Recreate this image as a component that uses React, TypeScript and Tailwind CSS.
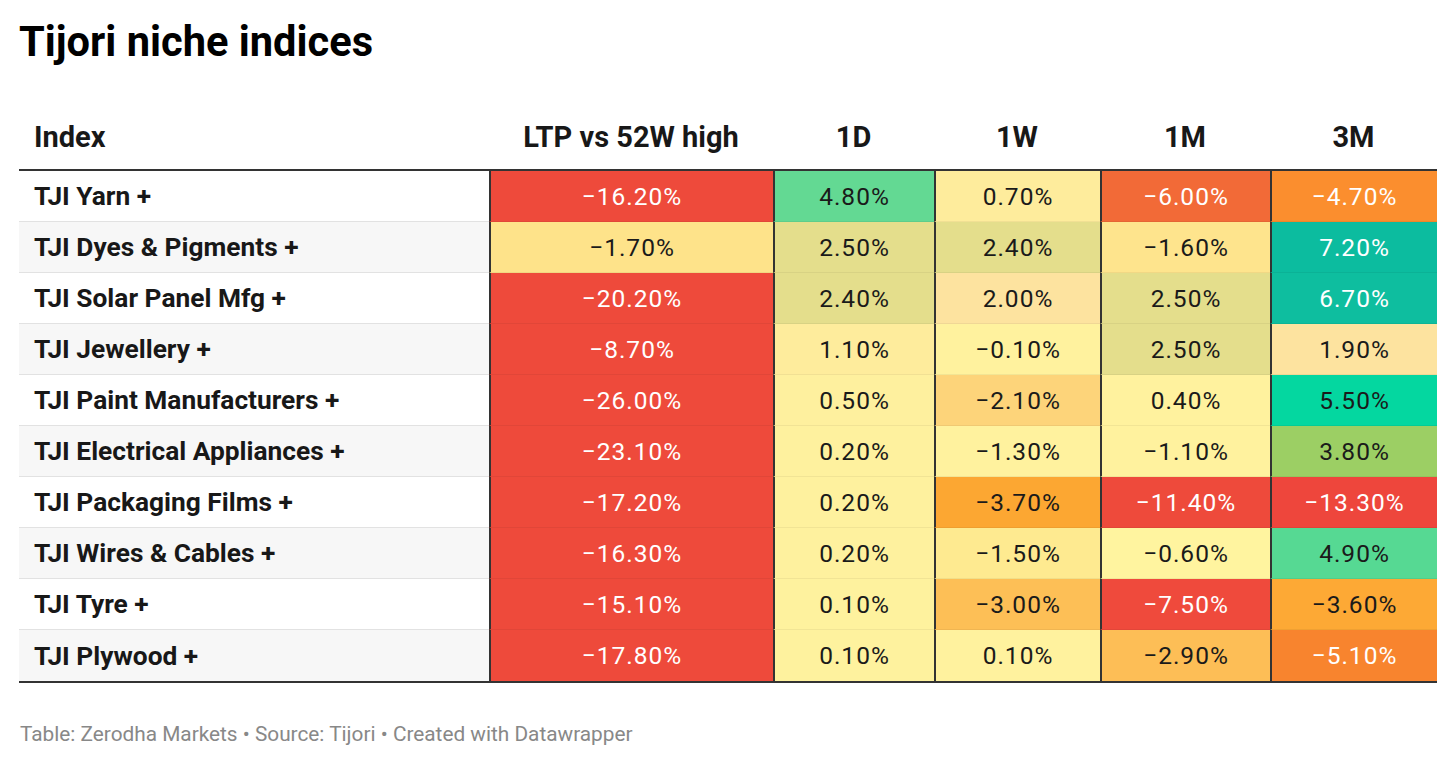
const COLUMNS = ['LTP vs 52W high', '1D', '1W', '1M', '3M'];

type Cell = { v: string; bg: string; light?: boolean };

const RED = '#ee4a3b';
const PALE = '#fff29e';

const ROWS: { name: string; cells: Cell[] }[] = [
  {
    name: 'TJI Yarn +',
    cells: [
      { v: '−16.20%', bg: RED, light: true },
      { v: '4.80%', bg: '#63d993' },
      { v: '0.70%', bg: '#feec9c' },
      { v: '−6.00%', bg: '#f26a37', light: true },
      { v: '−4.70%', bg: '#fb8e2e', light: true },
    ],
  },
  {
    name: 'TJI Dyes & Pigments +',
    cells: [
      { v: '−1.70%', bg: '#fee38a' },
      { v: '2.50%', bg: '#e4de8c' },
      { v: '2.40%', bg: '#e4de8c' },
      { v: '−1.60%', bg: '#fee48d' },
      { v: '7.20%', bg: '#0cbc9f', light: true },
    ],
  },
  {
    name: 'TJI Solar Panel Mfg +',
    cells: [
      { v: '−20.20%', bg: RED, light: true },
      { v: '2.40%', bg: '#e4de8c' },
      { v: '2.00%', bg: '#fde39f' },
      { v: '2.50%', bg: '#e4de8c' },
      { v: '6.70%', bg: '#0ebe9f', light: true },
    ],
  },
  {
    name: 'TJI Jewellery +',
    cells: [
      { v: '−8.70%', bg: RED, light: true },
      { v: '1.10%', bg: '#feec9c' },
      { v: '−0.10%', bg: PALE },
      { v: '2.50%', bg: '#e4de8c' },
      { v: '1.90%', bg: '#fde39f' },
    ],
  },
  {
    name: 'TJI Paint Manufacturers +',
    cells: [
      { v: '−26.00%', bg: RED, light: true },
      { v: '0.50%', bg: '#fef09e' },
      { v: '−2.10%', bg: '#fdd47a' },
      { v: '0.40%', bg: PALE },
      { v: '5.50%', bg: '#04d7a0' },
    ],
  },
  {
    name: 'TJI Electrical Appliances +',
    cells: [
      { v: '−23.10%', bg: RED, light: true },
      { v: '0.20%', bg: '#fef19e' },
      { v: '−1.30%', bg: PALE },
      { v: '−1.10%', bg: PALE },
      { v: '3.80%', bg: '#9ccf64' },
    ],
  },
  {
    name: 'TJI Packaging Films +',
    cells: [
      { v: '−17.20%', bg: RED, light: true },
      { v: '0.20%', bg: '#fef19e' },
      { v: '−3.70%', bg: '#fca732' },
      { v: '−11.40%', bg: RED, light: true },
      { v: '−13.30%', bg: '#ee463c', light: true },
    ],
  },
  {
    name: 'TJI Wires & Cables +',
    cells: [
      { v: '−16.30%', bg: RED, light: true },
      { v: '0.20%', bg: '#fef19e' },
      { v: '−1.50%', bg: '#feea90' },
      { v: '−0.60%', bg: '#fff49f' },
      { v: '4.90%', bg: '#56d993' },
    ],
  },
  {
    name: 'TJI Tyre +',
    cells: [
      { v: '−15.10%', bg: RED, light: true },
      { v: '0.10%', bg: '#fef29e' },
      { v: '−3.00%', bg: '#fdbf56' },
      { v: '−7.50%', bg: '#ef4a3c', light: true },
      { v: '−3.60%', bg: '#fda935' },
    ],
  },
  {
    name: 'TJI Plywood +',
    cells: [
      { v: '−17.80%', bg: RED, light: true },
      { v: '0.10%', bg: '#fef29e' },
      { v: '0.10%', bg: PALE },
      { v: '−2.90%', bg: '#fdbe56' },
      { v: '−5.10%', bg: '#f8842e', light: true },
    ],
  },
];

const GRID = 'grid grid-cols-[470px_284px_161px_166px_170px_167px]';

export default function App() {
  return (
    <div className="min-h-screen bg-white font-['Roboto',sans-serif] text-[#181818]">
      <h1 className="pl-[19px] pt-[17px] text-[41.6px] font-bold leading-[50px] text-black">Tijori niche indices</h1>

      <div className="ml-[19px] mt-[53px] w-[1418px]">
        <div className={`${GRID} border-b-2 border-[#333] pb-[15px] text-[29px] font-bold leading-[34px]`}>
          <div className="pl-[15px]">Index</div>
          {COLUMNS.map(c => (
            <div key={c} className="text-center">{c}</div>
          ))}
        </div>

        <div className="border-b-2 border-[#333]">
          {ROWS.map((row, i) => (
            <div key={row.name} className={`${GRID} h-[51px]`}>
              <div
                className={`flex items-center border-b border-[#e2e2e2] pl-[15px] pt-[2px] text-[26.3px] font-bold ${
                  i % 2 === 1 ? 'bg-[#f7f7f7]' : 'bg-white'
                } ${i === ROWS.length - 1 ? 'border-b-0' : ''}`}
              >
                {row.name}
              </div>
              {row.cells.map((c, j) => (
                <div
                  key={j}
                  className={`flex items-center justify-center border-l-2 border-l-[#333] pt-[2px] text-[24.5px] tracking-[1px] ${
                    i === ROWS.length - 1 ? '' : 'border-b border-b-black/5'
                  } ${c.light ? 'text-white' : 'text-[#1a1a1a]'}`}
                  style={{ backgroundColor: c.bg }}
                >
                  {c.v}
                </div>
              ))}
            </div>
          ))}
        </div>
      </div>

      <p className="ml-[20px] mt-[39px] text-[20.8px] leading-[24px] text-[#888]">
        Table: Zerodha Markets • Source: Tijori • Created with Datawrapper
      </p>
    </div>
  );
}
